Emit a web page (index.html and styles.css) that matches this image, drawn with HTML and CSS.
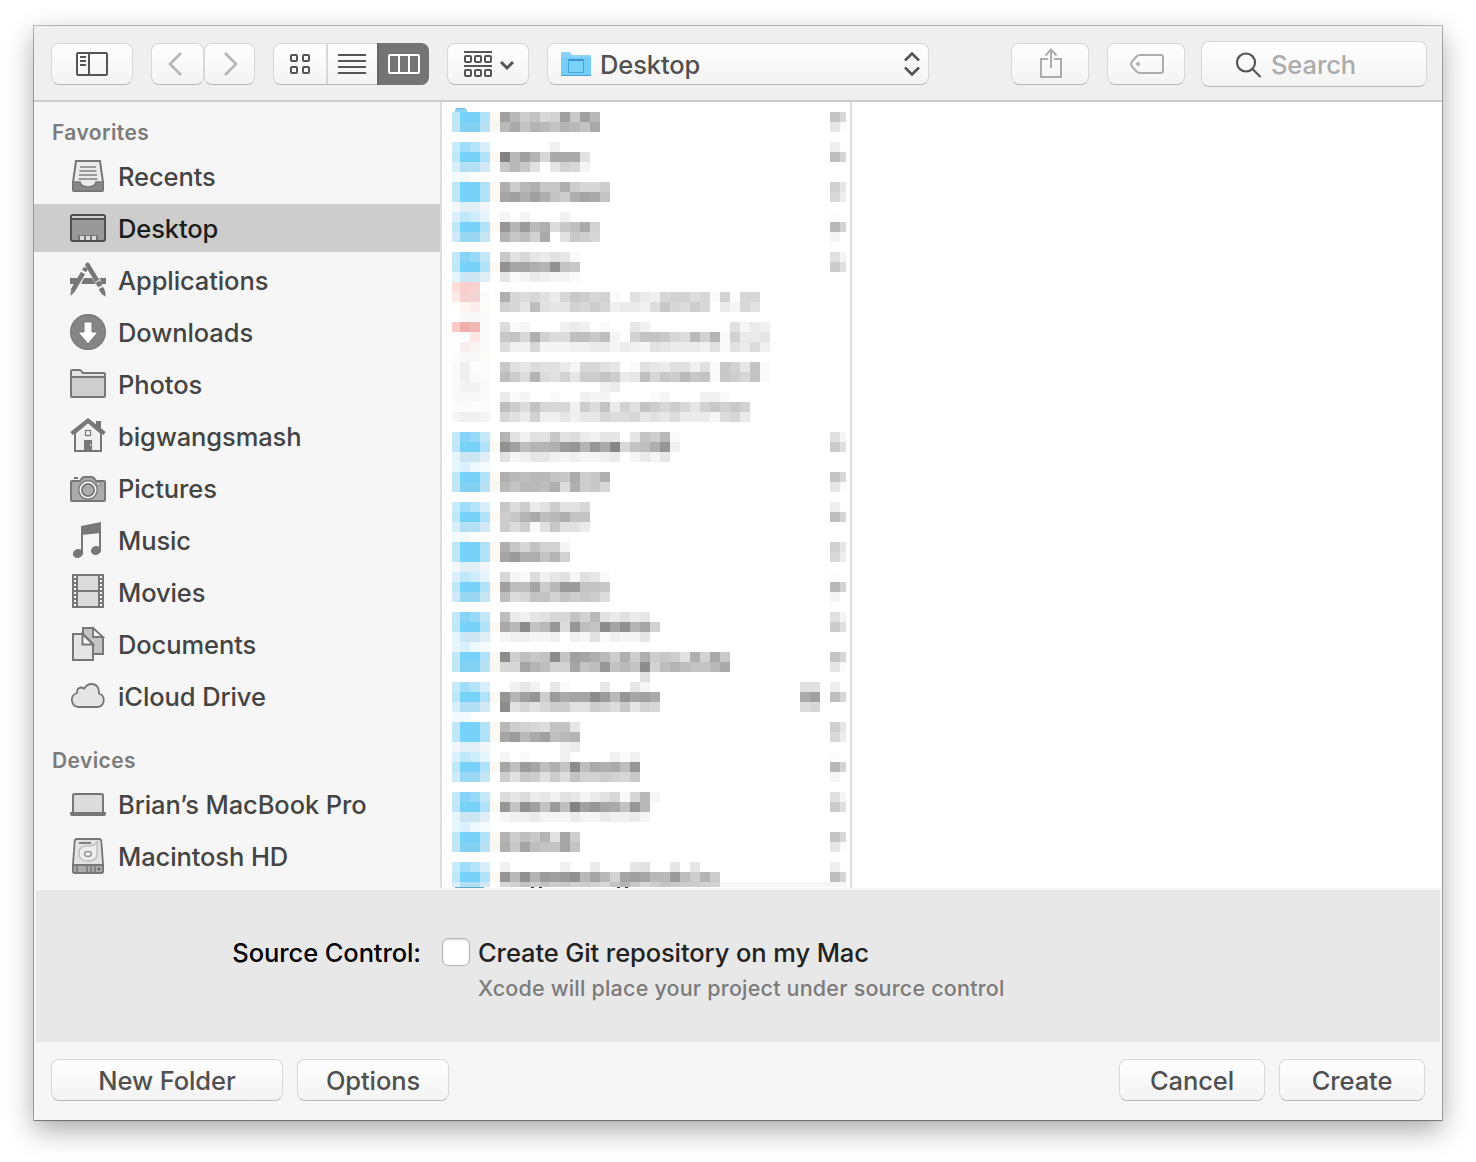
FILE: index.html
```html
<!DOCTYPE html>
<html lang="en">
<head>
<meta charset="utf-8">
<title>Save Project</title>
<link rel="stylesheet" href="styles.css">
</head>
<body>
<main class="window">
  <header class="toolbar">
    <button class="btn btn-sidebar" aria-label="Sidebar"><svg width="32" height="24" fill="none" stroke="#555" stroke-width="2"><rect x="1" y="1" width="30" height="22" rx="1"/><path d="M13 1v22M4 5h6M4 9h6M4 13h6"/></svg></button>
    <div class="nav">
      <button class="btn btn-back" aria-label="Back"><svg width="14" height="24" fill="none" stroke="#b6b6b6" stroke-width="2.6"><path d="M13 1L2 12l11 11"/></svg></button>
      <button class="btn btn-forward" aria-label="Forward"><svg width="14" height="24" fill="none" stroke="#b6b6b6" stroke-width="2.6"><path d="M1 1l11 11L1 23"/></svg></button>
    </div>
    <div class="btn segments">
      <span class="segment seg-icons"><svg width="20" height="20" fill="none" stroke="#555" stroke-width="2"><rect x="1" y="1" width="6" height="6" rx="1"/><rect x="13" y="1" width="6" height="6" rx="1"/><rect x="1" y="13" width="6" height="6" rx="1"/><rect x="13" y="13" width="6" height="6" rx="1"/></svg></span>
      <span class="segment seg-list"><svg width="28" height="20" stroke="#555" stroke-width="2"><path d="M0 1h28M0 7h28M0 13h28M0 19h28"/></svg></span>
      <span class="segment seg-columns"><svg width="32" height="20" fill="none" stroke="#fff" stroke-width="2"><rect x="1" y="1" width="30" height="18" rx="1"/><path d="M11 1v18M21 1v18"/></svg></span>
    </div>
    <button class="btn btn-arrange" aria-label="Arrange"><svg width="50" height="26" fill="none" stroke="#555" stroke-width="2"><path d="M0 1h28M0 15h28"/><rect x="1" y="5" width="6" height="6" rx="1"/><rect x="11" y="5" width="6" height="6" rx="1"/><rect x="21" y="5" width="6" height="6" rx="1"/><rect x="1" y="19" width="6" height="6" rx="1"/><rect x="11" y="19" width="6" height="6" rx="1"/><rect x="21" y="19" width="6" height="6" rx="1"/><path d="M37 11l6 6 6-6" stroke-width="3"/></svg></button>
    <button class="btn popup"><svg width="30" height="26"><path d="M0 2.5Q0 1 1.500 1H9l2 3h17.500Q30 4 30 5.500V9H0z" fill="#8bd2f6"/><path d="M0 6h30v18q0 1-1 1H1q-1 0-1-1z" fill="#74cef7"/><path d="M0 24.500h30" stroke="#4ba5cf" stroke-width="1"/><rect x="7.500" y="8.500" width="15" height="13" fill="#7bd3f9" stroke="#45a5dc"/><path d="M8 9h14" stroke="#3992cc" stroke-width="2"/></svg><span class="popup-label">Desktop</span><svg class="popup-arrows" width="16" height="24" fill="none" stroke="#555" stroke-width="2.600"><path d="M1 8.500l7-7 7 7M1 15.500l7 7 7-7"/></svg></button>
    <button class="btn btn-share" aria-label="Share"><svg width="22" height="30" fill="none" stroke="#adadad" stroke-width="2"><path d="M8 11H1v18h20V11h-7M11 20V2M5.500 7.500L11 1.500l5.500 6"/></svg></button>
    <button class="btn btn-tag" aria-label="Tags"><svg width="34" height="20" fill="none" stroke="#adadad" stroke-width="2"><path d="M10 1h21q2 0 2 2v14q0 2-2 2H10Q8 19 6.500 17.500L2 12.500Q0 10 2 7.500l4.500-5Q8 1 10 1z"/><circle cx="8" cy="10" r="2" fill="#adadad" stroke="none"/></svg></button>
    <div class="btn search"><svg width="26" height="27" fill="none" stroke="#555" stroke-width="2.200"><circle cx="10" cy="11.500" r="9"/><path d="M16.500 18l8 8"/></svg><span class="search-label">Search</span></div>
  </header>

  <div class="browser">
    <nav class="sidebar">
      <section class="group">
        <h2 class="group-title">Favorites</h2>
        <div class="item"><svg class="icon" viewBox="0 0 36 36"><path d="M6 3h24l3 21v8q0 1-1 1H4q-1 0-1-1v-8z" fill="#ebebeb" stroke="#777" stroke-width="2"/><path d="M3 24h7q1 5 8 5t8-5h7v8q0 1-1 1H4q-1 0-1-1z" fill="#888" stroke="#777" stroke-width="1.500"/><path d="M10 9h16M9.500 13h17M9 17h18M8.500 21h19" stroke="#999" stroke-width="2"/></svg><span>Recents</span></div>
        <div class="item selected"><svg class="icon" viewBox="0 0 36 36"><rect x="1" y="5" width="34" height="26" rx="2" fill="#999" stroke="#4e4e4e" stroke-width="2"/><path d="M2 7h32" stroke="#d0d0d0" stroke-width="2"/><path d="M1 9h34" stroke="#4e4e4e" stroke-width="2"/><path d="M8 30v-5h20v5z" fill="#777"/><path d="M10 26h4v4h-4zM16 26h4v4h-4zM22 26h4v4h-4z" fill="#ddd"/></svg><span>Desktop</span></div>
        <div class="item"><svg class="icon" viewBox="0 0 36 36"><path d="M0 16h8l-3 6H0zM14 16h8l4 6H11zM29 16h7v6h-4z" fill="#777"/><path d="M17.500 3L29 22" stroke="#777" stroke-width="4.600" stroke-linecap="round"/><path d="M13 11L2.500 29" stroke="#777" stroke-width="4.600"/><path d="M16 6l-2 3" stroke="#777" stroke-width="4.600"/><path d="M4.500 30L.5 34l.5-6zM26.500 22l5-2 1 4-4 2zM29 27l4-2q3 4 2.500 9.500Q30 32 29 27z" fill="#777"/><path d="M25.500 20.500l5-3M27.500 26l5.500-3" stroke="#f6f6f6" stroke-width="1"/></svg><span>Applications</span></div>
        <div class="item"><svg class="icon" viewBox="0 0 36 36"><circle cx="18" cy="18" r="17.300" fill="#858585" stroke="#777" stroke-width="1.400"/><path d="M14 8h8v10h6L18 30 8 18h6z" fill="#fff" stroke="#777"/></svg><span>Downloads</span></div>
        <div class="item"><svg class="icon" viewBox="0 0 36 36"><path d="M1 31V5q0-1 1-1h8q1 0 2 2l1 1h21q1 0 1 1v23z" fill="#e3e3e3"/><path d="M2 11h32v19H2z" fill="#cecece"/><path d="M1 30V5q0-1 1-1h8q1 0 2 2l1 1h21q1 0 1 1v22q0 1-1 1H2q-1 0-1-1zM2 11h32" fill="none" stroke="#777" stroke-width="2"/></svg><span>Photos</span></div>
        <div class="item"><svg class="icon" viewBox="0 0 36 36"><path d="M5 15L18 4l13 11v18H5z" fill="#f0f0f0" stroke="#777" stroke-width="2"/><path d="M26 10V3h5v12z" fill="#777"/><path d="M1.500 15.500L18 2.500l16.500 13" fill="none" stroke="#777" stroke-width="4"/><rect x="15.500" y="12.500" width="5" height="5" fill="none" stroke="#777" stroke-width="1.200"/><path d="M14 22h8v11h-8z" fill="#777"/><path d="M20.500 26v2" stroke="#eee"/></svg><span>bigwangsmash</span></div>
        <div class="item"><svg class="icon" viewBox="0 0 36 36"><path d="M4 8h4" stroke="#777" stroke-width="2"/><path d="M2 11h8l2-3 2-1h8l2 1 2 3h8q1 0 1 1v18q0 1-1 1H2q-1 0-1-1V12q0-1 1-1z" fill="#aaa" stroke="#777" stroke-width="2"/><circle cx="18" cy="20" r="9.200" fill="#fff" stroke="#777" stroke-width="1.400"/><circle cx="18" cy="20" r="7" fill="#777"/><circle cx="18" cy="20" r="4.600" fill="#aaa" stroke="#bbb" stroke-width="1"/><circle cx="28.500" cy="14" r="1.700" fill="#eee" stroke="#777"/></svg><span>Pictures</span></div>
        <div class="item"><svg class="icon" viewBox="0 0 36 36"><path d="M11 4L31 0v11l-20 2z" fill="#777"/><path d="M12 5v26M30 4v24" stroke="#777" stroke-width="2"/><ellipse cx="8" cy="31.500" rx="5.200" ry="4.300" transform="rotate(-15 8 31.500)" fill="#777"/><ellipse cx="26" cy="28.500" rx="5.200" ry="4.300" transform="rotate(-15 26 28.500)" fill="#777"/></svg><span>Music</span></div>
        <div class="item"><svg class="icon" viewBox="0 0 36 36"><path d="M2 0h32v34H2z" fill="#777"/><path d="M8 2h20v14H8zM8 18h20v14H8z" fill="#dcdcdc"/><path d="M5 2v32M31 2v32" stroke="#fff" stroke-width="2" stroke-dasharray="2 2"/></svg><span>Movies</span></div>
        <div class="item"><svg class="icon" viewBox="0 0 36 36"><path d="M13 2h10l10 10v16H13z" fill="#c4c4c4" stroke="#777" stroke-width="2"/><path d="M23 2v9h10z" fill="#f3f3f3" stroke="#777" stroke-width="1.800"/><path d="M3 8h10l10 10v16H3z" fill="#e5e5e5" stroke="#777" stroke-width="2"/><path d="M12.500 8v10.500H23z" fill="#fff" stroke="#777" stroke-width="2"/></svg><span>Documents</span></div>
        <div class="item"><svg class="icon" viewBox="0 0 36 36"><path d="M8 29A7.200 7.200 0 0 1 7 15q-.5-5 4-5.500 2 0 3 1.200Q17 6 21.500 6q7 0 7.500 8v1.500A7 7 0 0 1 28 29z" fill="#e5e5e5" stroke="#777" stroke-width="1.800"/></svg><span>iCloud Drive</span></div>
      </section>
      <section class="group devices">
        <h2 class="group-title">Devices</h2>
        <div class="item"><svg class="icon" viewBox="0 0 36 36"><rect x="3" y="8" width="30" height="20" rx="1.500" fill="#dcdcdc" stroke="#777" stroke-width="2"/><path d="M0 26h36v2q0 2-2 2H2q-2 0-2-2z" fill="#777"/></svg><span>Brian’s MacBook Pro</span></div>
        <div class="item"><svg class="icon" viewBox="0 0 36 36"><path d="M7 1h22q2 0 2.300 2L33 26v7q0 2-2 2H5q-2 0-2-2v-7L4.700 3Q5 1 7 1z" fill="#e2e2e2" stroke="#777" stroke-width="1.800"/><path d="M3 27h30v6q0 2-2 2H5q-2 0-2-2z" fill="#aaa" stroke="#777" stroke-width="1.800"/><path d="M9 5h12" stroke="#777" stroke-width="1.800"/><path d="M27 4v10q1 9-9 9-9 0-9-8t11-7q4 0 7-4z" fill="#eee" stroke="#bbb" stroke-width="1.300"/><ellipse cx="18" cy="16" rx="3.500" ry="2.500" fill="#eee" stroke="#999" stroke-width="1.400"/><path d="M7 28v6M17 28v6M21 28v6M25 28v6" stroke="#777" stroke-width="1.500"/><circle cx="29" cy="31" r="1.200" fill="#555"/></svg><span>Macintosh HD</span></div>
      </section>
    </nav>
    <div class="column"><svg id="listing" class="listing" width="408" height="786" shape-rendering="crispEdges"></svg></div>
    <div class="preview"></div>
  </div>

  <section class="accessory">
    <span class="accessory-label">Source Control:</span>
    <span class="checkbox"></span>
    <div class="option">
      <span class="option-title">Create Git repository on my Mac</span>
      <span class="option-note">Xcode will place your project under source control</span>
    </div>
  </section>

  <footer class="footer">
    <button class="btn btn-new">New Folder</button>
    <button class="btn btn-options">Options</button>
    <button class="btn btn-cancel">Cancel</button>
    <button class="btn btn-create">Create</button>
  </footer>
</main>
<script src="listing.js"></script>
</body>
</html>
```
FILE: styles.css
```css
* { box-sizing: border-box; }
body {
  margin: 0;
  padding: 26px 34px 42px;
  height: 1162px;
  overflow: hidden;
  background: #fff;
  font-family: Inter, "Liberation Sans", sans-serif;
  font-size: 25.5px;
  font-weight: 450;
  line-height: 32px;
  letter-spacing: -.1px;
  color: #444;
}
svg { display: block; flex: none; }
.window {
  display: flex;
  flex-direction: column;
  width: 1408px;
  height: 1094px;
  background: #f6f6f6;
  box-shadow: 0 0 0 1px rgba(0, 0, 0, .25), 0 1px 1px rgba(0, 0, 0, .2), 0 10px 26px rgba(0, 0, 0, .34);
}
.toolbar {
  display: flex;
  align-items: center;
  height: 76px;
  padding: 0 15px 0 17px;
  background: #efefef;
  border-bottom: 2px solid #cbcbcb;
}
.btn {
  display: flex;
  align-items: center;
  justify-content: center;
  flex: none;
  height: 42px;
  margin: 0;
  padding: 0;
  border: 1px solid #d8d8d8;
  border-bottom-color: #b9b9b9;
  border-radius: 8px;
  background: linear-gradient(#fff, #f3f3f3);
  font: inherit;
  letter-spacing: inherit;
  color: #505050;
}
.toolbar .btn { margin-top: 2px; }
.btn-sidebar { width: 82px; }
.nav { display: flex; margin-left: 18px; }
.btn-back { width: 53px; padding-right: 5px; }
.btn-forward { width: 51px; padding-left: 2px; }
.segments { width: 156px; margin-left: 18px; }
.toolbar .segments { justify-content: flex-start; }
.segment { display: flex; align-items: center; justify-content: center; height: 42px; flex: none; }
.seg-icons { width: 54px; height: 40px; border-right: 2px solid #d8d8d8; }
.seg-list { width: 49px; padding-right: 1px; }
.seg-columns { width: 52px; background: #747474; border-left: 2px solid #666; border-radius: 0 8px 8px 0; }
.btn-arrange { width: 82px; margin-left: 18px; padding-left: 1px; }
.popup { width: 382px; margin-left: 18px; padding: 0 8px 0 13px; justify-content: flex-start; }
.popup-label { margin-left: 9px; padding-top: 2px; }
.popup-arrows { margin-left: auto; }
.btn-share { width: 78px; margin-left: 82px; padding: 0 0 2px 2px; }
.btn-tag { width: 78px; margin-left: 18px; padding-left: 2px; }
.toolbar .search { width: 226px; height: 46px; margin-left: 16px; padding: 0 0 0 34px; justify-content: flex-start; }
.search-label { margin-left: 9px; padding-top: 2px; color: #acacac; }

.browser { display: flex; height: 786px; }
.sidebar { width: 406px; overflow: hidden; background: #f6f6f6; }
.group { padding-top: 10px; }
.devices { padding-top: 20px; }
.group-title {
  margin: 0;
  height: 40px;
  padding: 1px 0 0 18px;
  font-size: 21px;
  font-weight: 600;
  line-height: 40px;
  letter-spacing: .4px;
  color: #7b7b7b;
}
.item {
  display: flex;
  align-items: center;
  gap: 12px;
  height: 48px;
  margin-bottom: 4px;
  padding-left: 36px;
  white-space: nowrap;
}
.item span { padding-top: 2px; }
.group .item:last-child { margin-bottom: 0; }
.selected { background: #cdcdcd; color: #1c1c1c; }
.icon { width: 36px; height: 36px; overflow: visible; }
.column { width: 412px; border-left: 2px solid #dedede; border-right: 2px solid #dedede; background: #fff; }
.preview { flex: 1; background: #fff; }

.accessory {
  display: flex;
  height: 152px;
  margin: 2px 2px 0;
  background: #e8e8e8;
}
.accessory-label { width: 385px; padding-top: 47px; text-align: right; color: #000; white-space: nowrap; }
.checkbox {
  width: 28px;
  height: 28px;
  margin: 48px 8px 0 21px;
  border: 1px solid #b4b4b4;
  border-radius: 6px;
  background: #fff;
  box-shadow: inset 0 1px 2px rgba(0, 0, 0, .15);
}
.option { display: flex; flex-direction: column; padding-top: 47px; white-space: nowrap; }
.option-title { color: #222; }
.option-note { margin-top: 4px; font-size: 21.5px; line-height: 30px; letter-spacing: .2px; color: #7b7b7b; }

.footer { display: flex; padding: 17px 17px 0; height: 78px; }
.footer .btn { padding-top: 2px; }
.btn-new { width: 232px; }
.btn-options { width: 152px; margin-left: 14px; }
.btn-cancel { width: 146px; margin-left: auto; }
.btn-create { width: 146px; margin-left: 14px; }
```
FILE: listing.js
```js
// Obscured file list: a mosaic of 10px cells.
// In the name rows each letter is a grey level, from a = 255 down in steps of 5.
const names = [
  "tokmijtlto", "ormpompomr", "", "aaaaad", "zotpirrrg", "lolgafjic", "",
  "qkoqllqkiik", "stqtqmkqsrm", "", "cacaaad", "vpuoqhlnrj", "plnjraglki", "",
  "lgifegfb", "wssqpwml", "fbcedccb", "",
  "qihigeilkijbagedijjhibjaii", "jifngffjikideedhlihkiaecig", "",
  "hbcaaadedabaafdaaaaaaaagced", "lmiqjhhnnlncajmmlihojpbjeef", "hddicccddeecedcgfeeedgbgehd", "",
  "lgfhggeciigfabgfeggdgbljfmb", "nkhphgjfkkmkefnilkolmblkimb", "aaaaaaaaaade",
  "ebcaabaadccaaaabcaaaddb", "nkhmiiidkhmejgmkikifjljlj", "igejddfdffihhifgfheeechie", "",
  "pgdgglghedffafmkob", "wtnppquvpvryimnqvd", "gcdffdcdccdeacecf", "",
  "qonoomlrklq", "omoonqhqkli", "", "lhkegkggi", "klprnoqmm", "khkbglgge", "",
  "qlimjjc", "suqqmpj", "", "icbhdfgcgfb", "tnnskouumml", "nhimmjmklkh", "",
  "nedfgiimjogegef", "roxmovhvnmxswpsj", "cddccdadcgbdccf", "",
  "xknlmxmtsqokqkqklkgqjrl", "iispnjjsmnvmomxjnpnmmor", "aaaaaaaaaaaaaag",
  "adfdafbaaafaafcaaaaaaaaaaaaaaagg", "vptvkurssxuovstraaaaaaaaaaaaaart",
  "xgigikkggkjhlfjiaaaaaaaaaaaaaahi", "",
  "okjihmmf", "suortnop", "aaaaaade", "cabaaadaaaadbd", "snusnqmxnrqrnv", "kglkgkhmjjkjil", "",
  "hfhefdgfcegibioc", "vmwtmunztvsrmvo", "cddecccecceddec", "",
  "pknlpgsk", "qlsnmmsm", "", "daaaaadaaeaaafgaafafa", "vowputuwosojstsoounkpk", "ijmkmkljkjimplikmlkkjj"
];
const strong = ["c0e8fa", "76d2f8", "76d2f8", "b0e2f9", "fcf9f5"];
const lower = ["c2e8f6", "82d0f2", "82d0f2", "b8e2f4", "f8f6f2"];
// The folder and disclosure columns repeat every 18 rows.
const folders = [
  strong, lower, [],
  ["c8ebfb", "a0ddf8", "b4e4f9", "d6effb"], strong, ["d8eef8", "b2dff3", "b2dff3", "d0e9f4"], ["f2faff", "f2faff"],
  strong, strong, ["f3f7fa", "e3eff6", "e3eff6", "f0f6f9"],
  ["dcf1fe", "bee7fa", "ceedfb", "e4f5fe"], strong, ["cdeaf6", "9ad7f2", "9ad7f2", "c4e6f4"], [],
  ["c2e8fa", "86d3f7", "96d9f8", "c2e8fa"], strong, ["e6f4fb", "cce6f4", "cce6f4", "e0eff6"],
  ["e6f6fd", "daf1fd", "eef9ff", "f4fbff"]
];
const files = [
  ["ffdedc", "fad0ce", "f8d2d0"], ["fde8e8", "f4d2d2", "f4d4d2", "fafafa"], ["ffffff", "fdf4f4", "fdecec", "fbfbfa"],
  ["ffffff", "f8f8f8", "f8f8f8", "fafafa"], ["fac8c6", "f4aeaa", "f2b8b6", "fafafa"], ["fdfdfd", "fafdfd", "fde6e4", "fafafa"],
  ["ffffff", "f8f0f0", "f8f5f4", "f9f9f9"], ["fcfcfc", "f8f8f8", "f8f8f8", "fbfbfa"], ["f9f9f9", "f0f0f0", "fdfdfd", "fbfbfb"],
  ["f9f9f9", "f0f0f0", "fafafa", "fbfbfb"], ["f9f9f9", "f3f3f3", "f3f3f3", "f9f9f9"], ["fafafa", "f8f8f8", "f8f8f8", "fafafa"],
  ["fbfbfb", "fafafa", "fdfdfd", "fbfbfb"], ["f6f6f6", "f0f0f0", "f0f0f0", "f4f4f4"], []
];
const arrows = [
  ["c4", "d8"], ["e6", "fa"], [], ["ee", "fe"], ["be", "d6"], [], [], ["d0", "e6"], ["d8", "ee"],
  [], ["fc", "ff"], ["b8", "d4"], ["f5", "ff"], [], ["e0", "f5"], ["cb", "e0"], [], []
];
const svg = document.getElementById("listing");
function cell(x, y, w, h, color) {
  const r = document.createElementNS("http://www.w3.org/2000/svg", "rect");
  Object.entries({ x, y, width: w, height: h, fill: color }).forEach(([k, v]) => r.setAttribute(k, v));
  svg.appendChild(r);
}
cell(14, 6, 9, 1, "#70bfe3");
cell(13, 7, 12, 3, "#8bd4f7");
names.forEach((row, i) => {
  const y = 10 + i * 10;
  const h = i === names.length - 1 ? 5 : 10;
  const isFile = i >= 17 && i < 32;
  const icon = isFile ? files[i - 17] : folders[i % 18];
  icon.forEach((c, k) => cell(k ? 8 + k * 10 : 10, y, k ? 10 : 8, h, "#" + c));
  if (!isFile) arrows[i % 18].forEach((g, k) => cell(388 + k * 10, y, k ? 6 : 10, h, "#" + g + g + g));
  [...row].forEach((c, k) => {
    if (c === "a") return;
    const v = 255 - (c.charCodeAt(0) - 97) * 5;
    cell(58 + k * 10, y, 10, h, `rgb(${v},${v},${v})`);
  });
});
cell(278, 780, 126, 5, "#f6f6f6");
cell(13, 785, 29, 1, "#62acc9");
[89, 97, 175, 183].forEach(x => cell(x, 785, 3, 1, "#333"));
```
